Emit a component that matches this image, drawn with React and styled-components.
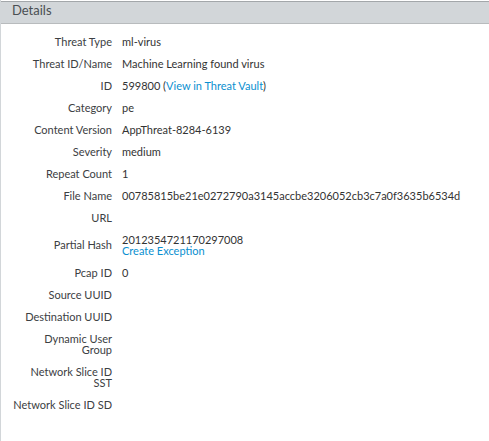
import React from "react";
import styled, { createGlobalStyle } from "styled-components";

const Global = createGlobalStyle`
  html, body { margin: 0; padding: 0; background: #fff; }
  body { font-family: Lato, "Open Sans", sans-serif; font-size: 11px; color: #333; }
`;
const Panel = styled.section`
  width: 489px;
  height: 441px;
  overflow: hidden;
  box-sizing: border-box;
  border-left: 1px solid #d2d6d9;
`;
const Header = styled.header`
  box-sizing: border-box;
  height: 23px;
  margin: 1px 0 0 -1px;
  padding-left: 12px;
  background: #d2d6d9;
  border-top: 1px solid #a3a7aa;
  border-bottom: 1px solid #b8bbbd;
  color: #4a4f53;
  font-size: 13px;
  line-height: 17px;
`;
const Rows = styled.dl`
  margin: 0;
  padding: 6px 0 0 11px;
`;
const Row = styled.div`
  display: grid;
  grid-template-columns: 100px 1fr;
  column-gap: 10px;
  align-items: center;
  padding: 5.5px 0;
`;
const Label = styled.dt`
  text-align: right;
  line-height: 11px;
  color: #3c4043;
`;
const Value = styled.dd`
  margin: 0;
  line-height: 11px;
  color: #333;
  white-space: nowrap;
`;
const Link = styled.a`
  color: #0a8fd0;
  text-decoration: none;
  cursor: pointer;
`;

const rows = [
  ["Threat Type", "ml-virus"],
  ["Threat ID/Name", "Machine Learning found virus"],
  ["ID", <>599800 (<Link>View in Threat Vault</Link>)</>],
  ["Category", "pe"],
  ["Content Version", "AppThreat-8284-6139"],
  ["Severity", "medium"],
  ["Repeat Count", "1"],
  ["File Name", "00785815be21e0272790a3145accbe3206052cb3c7a0f3635b6534d"],
  ["URL", ""],
  ["Partial Hash", <>2012354721170297008<br /><Link>Create Exception</Link></>],
  ["Pcap ID", "0"],
  ["Source UUID", ""],
  ["Destination UUID", ""],
  ["Dynamic User Group", ""],
  ["Network Slice ID SST", ""],
  ["Network Slice ID SD", ""],
];

export default function App() {
  return (
    <>
      <Global />
      <Panel>
        <Header>Details</Header>
        <Rows>
          {rows.map(([label, value]) => (
            <Row key={label}>
              <Label>{label}</Label>
              <Value>{value}</Value>
            </Row>
          ))}
        </Rows>
      </Panel>
    </>
  );
}
